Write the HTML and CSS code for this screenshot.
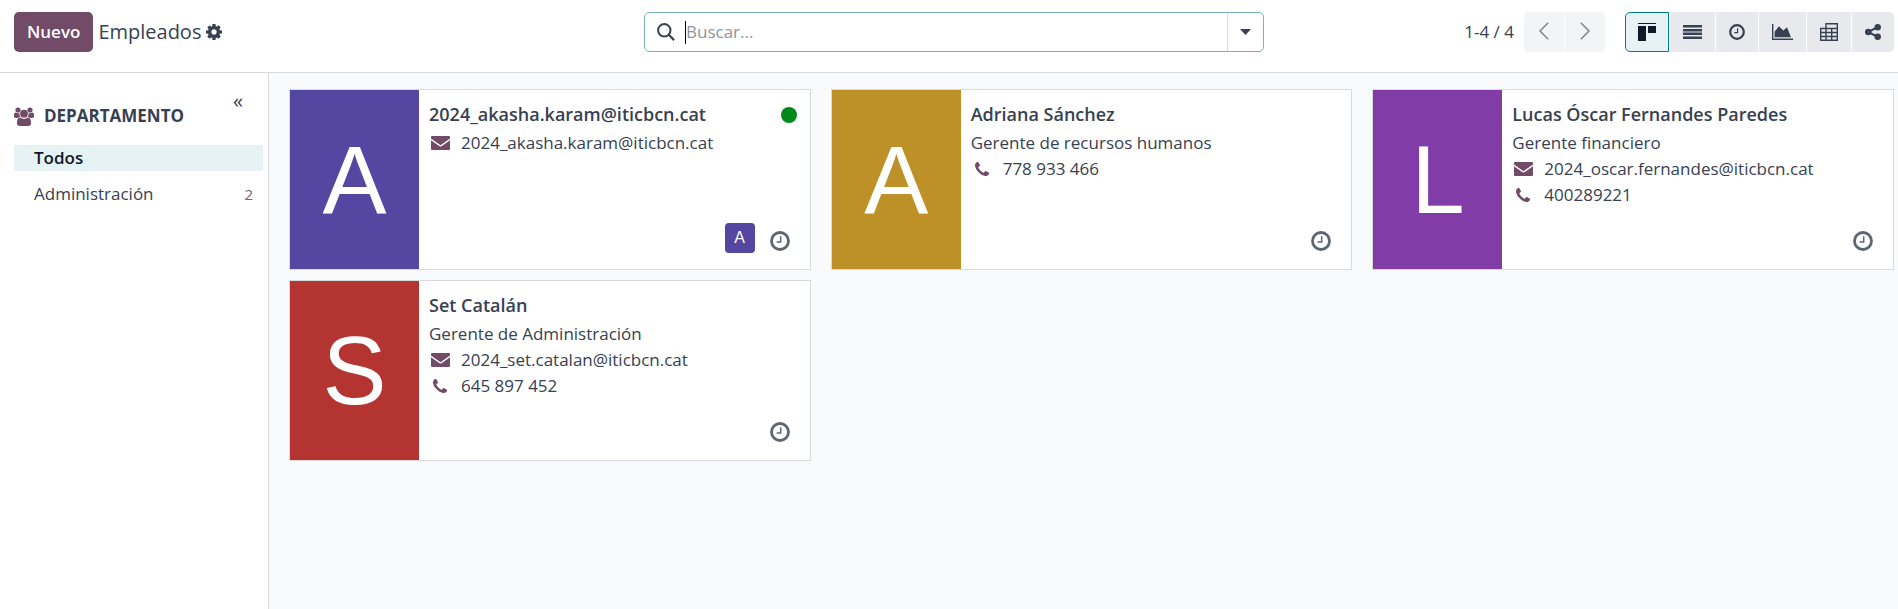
FILE: index.html
```
<!DOCTYPE html>
<html lang="es">
<head>
<meta charset="utf-8">
<meta name="viewport" content="width=device-width, initial-scale=1">
<title>Empleados</title>
<link rel="stylesheet" href="styles.css">
</head>
<body>
<svg class="sprite" aria-hidden="true">
  <symbol id="i-cog" viewBox="128 128 1536 1536"><path d="M1152 896q0-106-75-181t-181-75-181 75-75 181 75 181 181 75 181-75 75-181zm512-109v222q0 12-8 23t-20 13l-185 28q-19 54-39 91 35 50 107 138 10 12 10 25t-9 23q-27 37-99 108t-94 71q-12 0-26-9l-138-108q-44 23-91 38-16 136-29 186-7 28-36 28h-222q-14 0-24.500-8.500t-11.500-21.500l-28-184q-49-16-90-37l-141 107q-10 9-25 9-14 0-25-11-126-114-165-168-7-10-7-23 0-12 8-23 15-21 51-66.500t54-70.500q-27-50-41-99l-183-27q-13-2-21-12.500t-8-23.500v-222q0-12 8-23t19-13l186-28q14-46 39-92-40-57-107-138-10-12-10-24 0-10 9-23 26-36 98.500-107.500t94.500-71.500q13 0 26 10l138 107q44-23 91-38 16-136 29-186 7-28 36-28h222q14 0 24.500 8.500t11.500 21.500l28 184q49 16 90 37l142-107q9-9 24-9 13 0 25 10 129 119 165 170 7 8 7 22 0 12-8 23-15 21-51 66.500t-54 70.500q26 50 41 98l183 28q13 2 21 12.500t8 23.500z"/></symbol>
  <symbol id="i-phone" viewBox="192 128 1408 1408"><path d="M1600 1240q0 27-10 70.500t-21 68.500q-21 50-122 106-94 51-186 51-27 0-53-3.500t-57.500-12.500-47-14.500-55.500-20.500-49-18q-98-35-175-83-127-79-264-216t-216-264q-48-77-83-175-3-9-18-49t-20.500-55.500-14.500-47-12.500-57.500-3.500-53q0-92 51-186 56-101 106-122 25-11 68.500-21t70.500-10q14 0 21 3 18 6 53 76 11 19 30 54t35 63.500 31 53.500q3 4 17.500 25t21.500 35.500 7 28.500q0 20-28.500 50t-62 55-62 53-28.500 46q0 9 5 22.500t8.500 20.500 14 24 11.500 19q76 137 174 235t235 174q2 1 19 11.500t24 14 20.500 8.500 22.500 5q18 0 46-28.500t53-62 55-62 50-28.500q14 0 28.500 7t35.500 21.500 25 17.500q25 15 53.500 31t63.500 35 54 30q70 35 76 53 3 7 3 21z"/></symbol>
  <symbol id="i-mail" viewBox="0 0 19 14"><path d="M1 0h17q1 0 1 1v1.600L9.500 9.200 0 2.600V1q0-1 1-1zM0 4.200l7.800 5.600q1.700 1.200 3.400 0L19 4.200V13q0 1-1 1H1q-1 0-1-1z"/></symbol>
  <symbol id="i-clock" viewBox="0 0 20 20"><circle cx="10" cy="10" r="8.500" fill="none" stroke="currentColor" stroke-width="2.800"/><path d="M10.700 5.300v5.600H6.600" fill="none" stroke="currentColor" stroke-width="1.500"/></symbol>
  <symbol id="i-users" viewBox="0 0 20 19"><circle cx="4" cy="3" r="2.600"/><circle cx="16" cy="3" r="2.600"/><path d="M0 8.600q0-3.100 1.600-3.100 1.900 1.300 3.800.5-.4 2.300.8 3.900-1.600.1-2.500 1.100H1.800Q0 11 0 9.300zM20 8.600q0-3.100-1.600-3.100-1.900 1.300-3.800.5.400 2.300-.8 3.900 1.600.1 2.500 1.100h1.900Q20 11 20 9.300z"/><circle cx="10" cy="6.700" r="3.900"/><path d="M6.300 10.600q3.700 2.800 7.400 0 3.300 0 3.300 5.400 0 3-2.600 3H5.600Q3 19 3 16q0-5.400 3.300-5.400z"/></symbol>
  <symbol id="i-search" viewBox="0 0 18 18"><circle cx="7.300" cy="7.300" r="6.200" fill="none" stroke="currentColor" stroke-width="2"/><path d="m11.800 11.800 5.300 5.300" stroke="currentColor" stroke-width="2.200"/></symbol>
  <symbol id="i-caret" viewBox="0 0 11 6"><path d="M0 0h11L5.500 6z"/></symbol>
  <symbol id="i-prev" viewBox="0 0 10 18"><path d="M9.200.8 1 9l8.200 8.200" fill="none" stroke="currentColor" stroke-width="1.500"/></symbol>
  <symbol id="i-next" viewBox="0 0 10 18"><path d="M.8.800 9 9 .8 17.200" fill="none" stroke="currentColor" stroke-width="1.500"/></symbol>
  <symbol id="i-kanban" viewBox="0 0 18 18"><path d="M0 0h18v1H0zM0 3h8v15H0zM10 3h8v7h-8z"/></symbol>
  <symbol id="i-list" viewBox="0 0 19 14"><path d="M0 0h19v2.500H0zM0 4h19v2.500H0zM0 7.500h19V10H0zM0 11.500h19V14H0z"/></symbol>
  <symbol id="i-area" viewBox="0 0 21 16"><path d="M0 0h1.400v14.600H21V16H0zM2.600 13.300V7.800L7 2.200l4.300 4.200L15 3.200l4 10.100z"/></symbol>
  <symbol id="i-pivot" viewBox="0 0 18 18"><path d="M6 .7h11.300v16.600H.7V5.500H6zM.7 9.500h16.600M.7 13.500h16.600M6 5.500h11.300M6 5.500v11.800M11.700 5.500v11.800" fill="none" stroke="currentColor" stroke-width="1.400"/></symbol>
  <symbol id="i-share" viewBox="0 0 16 16"><path d="M3.200 8 12.700 3.100M3.200 8l9.500 4.900" stroke="currentColor" stroke-width="2"/><circle cx="3.200" cy="8" r="3.200"/><circle cx="12.700" cy="3.200" r="3.200"/><circle cx="12.700" cy="12.800" r="3.200"/></symbol>
</svg>

<header class="topbar">
  <div class="topbar-start">
    <button class="btn-new" type="button">Nuevo</button>
    <h1 class="title">Empleados</h1>
    <button class="icon-btn" type="button" aria-label="Acciones"><svg class="ico-16"><use href="#i-cog"/></svg></button>
  </div>
  <form class="search" role="search">
    <label class="search-label" for="q" aria-label="Buscar"><svg class="ico-18"><use href="#i-search"/></svg></label>
    <input class="search-input" id="q" type="text" placeholder="Buscar...">
    <button class="search-toggle" type="button" aria-label="Filtros"><svg class="ico-caret"><use href="#i-caret"/></svg></button>
  </form>
  <div class="topbar-end">
    <span class="pager-text">1-4 / 4</span>
    <div class="group pager">
      <button type="button" aria-label="Anterior"><svg class="ico-chevron"><use href="#i-prev"/></svg></button>
      <button type="button" aria-label="Siguiente"><svg class="ico-chevron"><use href="#i-next"/></svg></button>
    </div>
    <div class="group views">
      <button class="active" type="button" aria-label="Kanban"><svg class="ico-18"><use href="#i-kanban"/></svg></button>
      <button type="button" aria-label="Lista"><svg class="ico-list"><use href="#i-list"/></svg></button>
      <button type="button" aria-label="Actividad"><svg class="ico-16"><use href="#i-clock"/></svg></button>
      <button type="button" aria-label="Gráfico"><svg class="ico-area"><use href="#i-area"/></svg></button>
      <button type="button" aria-label="Tabla dinámica"><svg class="ico-18"><use href="#i-pivot"/></svg></button>
      <button type="button" aria-label="Jerarquía"><svg class="ico-16"><use href="#i-share"/></svg></button>
    </div>
  </div>
</header>

<div class="layout">
  <aside class="sidebar">
    <div class="side-head">
      <h2 class="side-title"><svg class="ico-users"><use href="#i-users"/></svg>DEPARTAMENTO</h2>
      <button class="collapse" type="button" aria-label="Contraer">«</button>
    </div>
    <ul class="side-list">
      <li><button class="side-item selected" type="button">Todos</button></li>
      <li><button class="side-item" type="button">Administración <span class="count">2</span></button></li>
    </ul>
  </aside>

  <main class="cards">
    <article class="card">
      <div class="avatar indigo">A</div>
      <div class="info">
        <h3 class="name">2024_akasha.karam@iticbcn.cat <span class="presence"></span></h3>
        <p class="line"><svg class="ico-mail"><use href="#i-mail"/></svg>2024_akasha.karam@iticbcn.cat</p>
        <div class="foot"><span class="mini indigo">A</span><button class="icon-btn" type="button" aria-label="Actividades"><svg class="ico-20"><use href="#i-clock"/></svg></button></div>
      </div>
    </article>
    <article class="card">
      <div class="avatar ochre">A</div>
      <div class="info">
        <h3 class="name">Adriana Sánchez</h3>
        <p class="line">Gerente de recursos humanos</p>
        <p class="line"><svg class="ico-phone"><use href="#i-phone"/></svg>778 933 466</p>
        <div class="foot"><button class="icon-btn" type="button" aria-label="Actividades"><svg class="ico-20"><use href="#i-clock"/></svg></button></div>
      </div>
    </article>
    <article class="card">
      <div class="avatar violet">L</div>
      <div class="info">
        <h3 class="name">Lucas Óscar Fernandes Paredes</h3>
        <p class="line">Gerente financiero</p>
        <p class="line"><svg class="ico-mail"><use href="#i-mail"/></svg>2024_oscar.fernandes@iticbcn.cat</p>
        <p class="line"><svg class="ico-phone"><use href="#i-phone"/></svg>400289221</p>
        <div class="foot"><button class="icon-btn" type="button" aria-label="Actividades"><svg class="ico-20"><use href="#i-clock"/></svg></button></div>
      </div>
    </article>
    <article class="card">
      <div class="avatar red">S</div>
      <div class="info">
        <h3 class="name">Set Catalán</h3>
        <p class="line">Gerente de Administración</p>
        <p class="line"><svg class="ico-mail"><use href="#i-mail"/></svg>2024_set.catalan@iticbcn.cat</p>
        <p class="line"><svg class="ico-phone"><use href="#i-phone"/></svg>645 897 452</p>
        <div class="foot"><button class="icon-btn" type="button" aria-label="Actividades"><svg class="ico-20"><use href="#i-clock"/></svg></button></div>
      </div>
    </article>
  </main>
</div>
</body>
</html>
```
FILE: styles.css
```
:root {
  --text: #374151;
  --brand: #714b67;
  --line: #d8dadd;
  --teal: #017e84;
}
*, *::before, *::after { box-sizing: border-box; }
body {
  margin: 0;
  min-height: 100vh;
  display: flex;
  flex-direction: column;
  background: #f9fafb;
  color: var(--text);
  font: 17px/26px "Open Sans", "Noto Sans", sans-serif;
}
h1, h2, h3, p, ul { margin: 0; padding: 0; }
ul { list-style: none; }
button {
  font: inherit;
  color: inherit;
  border: 0;
  padding: 0;
  background: none;
  cursor: pointer;
}
svg { display: block; fill: currentColor; flex: none; }
.sprite { position: absolute; width: 0; height: 0; }
.ico-16 { width: 16px; height: 16px; }
.ico-18 { width: 18px; height: 18px; }
.ico-20 { width: 20px; height: 20px; }
.ico-caret { width: 11px; height: 6px; }
.ico-chevron { width: 10px; height: 18px; }
.ico-list { width: 19px; height: 14px; }
.ico-area { width: 21px; height: 16px; }
.ico-users { width: 20px; height: 19px; }

/* Top bar */
.topbar {
  display: grid;
  grid-template-columns: 1fr 620px 1fr;
  column-gap: 10px;
  align-items: center;
  padding: 12px 4px 20px 14px;
  background: #fff;
  border-bottom: 1px solid var(--line);
}
.topbar-start { display: flex; align-items: center; gap: 5px; }
.btn-new {
  height: 40px;
  padding: 0 13px;
  border-radius: 5px;
  background: var(--brand);
  color: #fff;
  font-weight: 600;
}
.title { font-size: 20px; font-weight: 400; }
.search {
  display: flex;
  align-items: center;
  height: 40px;
  border: 1px solid #74b4b9;
  border-radius: 5px;
  background: #fff;
}
.search-label { padding: 0 10px 0 12px; }
.search-input {
  flex: 1;
  min-width: 0;
  height: 23px;
  padding: 0;
  border: 0;
  border-left: 1px solid #000;
  outline: 0;
  font: inherit;
  color: inherit;
}
.search-input::placeholder { color: #8f949c; opacity: 1; }
.search-toggle {
  display: grid;
  place-items: center;
  width: 36px;
  height: 38px;
  border-left: 1px solid var(--line);
}
.topbar-end { display: flex; align-items: center; justify-content: flex-end; }
.pager-text { margin-right: 10px; }
.group { display: flex; gap: 1px; }
.group button {
  display: grid;
  place-items: center;
  height: 40px;
  background: #e7e9ed;
}
.group button:first-child { border-radius: 5px 0 0 5px; }
.group button:last-child { border-radius: 0 5px 5px 0; }
.pager { margin-right: 20px; }
.group.pager button { width: 40px; padding-bottom: 2px; background: #f3f4f6; color: #808388; }
.views button { padding: 0 13px; }
.group.views .active {
  padding: 0 12px;
  background: #e6f2f3;
  border: 1px solid var(--teal);
  color: #111827;
}

/* Body */
.layout { flex: 1; display: flex; }
.sidebar {
  flex: 0 0 269px;
  padding: 16px 5px 0 14px;
  background: #fff;
  border-right: 1px solid var(--line);
}
.side-head {
  display: flex;
  align-items: flex-start;
  justify-content: space-between;
  padding-right: 20px;
  margin-bottom: 16px;
}
.collapse {
  height: 24px;
  font-size: 20px;
  line-height: 24px;
}
.side-title {
  display: flex;
  align-items: center;
  gap: 10px;
  padding-top: 14px;
  font-size: 17px;
  font-weight: 700;
  line-height: 26px;
}
.side-title svg { color: var(--brand); }
.side-list { display: flex; flex-direction: column; gap: 10px; }
.side-item {
  display: flex;
  justify-content: space-between;
  align-items: center;
  width: 100%;
  height: 26px;
  padding: 0 10px 0 20px;
}
.selected { background: #e6f2f3; color: #111827; font-weight: 600; }
.count { font-size: 15px; color: #5f6672; }

.cards {
  flex: 1;
  display: grid;
  grid-template-columns: repeat(3, 1fr);
  align-content: start;
  gap: 10px 20px;
  padding: 16px 4px 16px 20px;
}
.card {
  display: flex;
  min-height: 181px;
  background: #fff;
  border: 1px solid var(--line);
}
.avatar {
  display: grid;
  place-items: center;
  flex: 0 0 129px;
  color: #fff;
  font: 96px/1 "Liberation Sans", Arial, sans-serif;
}
.indigo { background: #5546a2; }
.ochre { background: #bd9127; }
.violet { background: #813ca8; }
.red { background: #b43432; }
.info {
  flex: 1;
  display: flex;
  flex-direction: column;
  min-width: 0;
  padding: 11px 13px 16px 10px;
}
.name {
  display: flex;
  justify-content: space-between;
  align-items: center;
  margin-bottom: 2px;
  font-size: 18px;
  font-weight: 600;
  line-height: 27px;
}
.presence {
  width: 16px;
  height: 16px;
  border-radius: 50%;
  background: #008818;
}
.line { display: flex; align-items: center; }
.line svg { color: var(--brand); }
.ico-mail { width: 19px; height: 14px; margin: 0 11px 0 2px; }
.ico-phone { width: 14px; height: 14px; margin: 0 14px 0 4px; }
.foot {
  display: flex;
  align-items: center;
  justify-content: flex-end;
  gap: 15px;
  height: 30px;
  margin-top: auto;
  padding-right: 7px;
}
.foot .icon-btn { color: #5f6672; padding-top: 6px; }
.mini {
  display: grid;
  place-items: center;
  width: 30px;
  height: 30px;
  border-radius: 4px;
  color: #fff;
  font: 16px/1 "Liberation Sans", Arial, sans-serif;
}
```
